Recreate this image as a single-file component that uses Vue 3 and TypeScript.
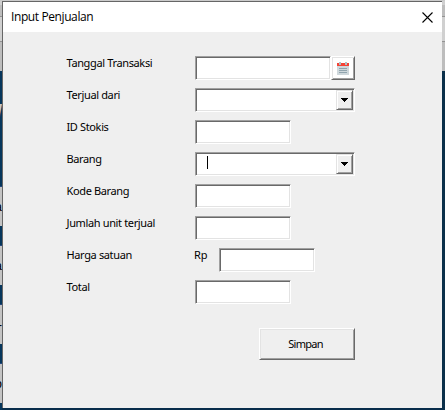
<script setup lang="ts">
import { ref } from 'vue'

interface Field {
  label: string
  kind: 'date' | 'combo' | 'text' | 'price'
  focused?: boolean
}

interface Band {
  height: number
  tone: 'light' | 'mid' | 'line' | 'navy' | 'cell'
  text?: string
}

const title = ref('Input Penjualan')

const fields: Field[] = [
  { label: 'Tanggal Transaksi', kind: 'date' },
  { label: 'Terjual dari', kind: 'combo' },
  { label: 'ID Stokis', kind: 'text' },
  { label: 'Barang', kind: 'combo', focused: true },
  { label: 'Kode Barang', kind: 'text' },
  { label: 'Jumlah unit terjual', kind: 'text' },
  { label: 'Harga satuan', kind: 'price' },
  { label: 'Total', kind: 'text' },
]

const leftBands: Band[] = [
  { height: 4, tone: 'light' },
  { height: 11, tone: 'mid' },
  { height: 1, tone: 'line' },
  { height: 24, tone: 'light' },
  { height: 1, tone: 'line' },
  { height: 29, tone: 'mid' },
  { height: 33, tone: 'navy' },
  { height: 18, tone: 'navy', text: '/' },
  { height: 64, tone: 'navy' },
  { height: 40, tone: 'cell', text: 'a' },
  { height: 19, tone: 'navy' },
  { height: 40, tone: 'cell', text: 'a' },
  { height: 19, tone: 'navy' },
  { height: 40, tone: 'cell', text: '-' },
  { height: 19, tone: 'navy' },
  { height: 40, tone: 'cell', text: 'o' },
  { height: 7, tone: 'navy' },
]

const rightBands: Band[] = [
  { height: 4, tone: 'light' },
  { height: 11, tone: 'mid' },
  { height: 1, tone: 'line' },
  { height: 24, tone: 'light' },
  { height: 1, tone: 'line' },
  { height: 29, tone: 'mid' },
  { height: 339, tone: 'navy' },
]
</script>

<template>
  <div class="screen">
    <div class="sheet-top"><span class="first">Controls</span><span class="second">Time</span></div>
    <div class="middle">
      <div class="strip left">
        <div v-for="(b, i) in leftBands" :key="i" class="band" :class="b.tone" :style="{ height: b.height + 'px' }">
          <span v-if="b.text">{{ b.text }}</span>
        </div>
      </div>
      <section class="dialog">
        <header class="titlebar">
          <span class="title">{{ title }}</span>
          <svg class="close" width="11" height="11" viewBox="0 0 11 11">
            <path d="M.5 .5 10.5 10.5M10.5 .5 .5 10.5" stroke="#000" stroke-width="1.1" fill="none" />
          </svg>
        </header>
        <form class="form" @submit.prevent>
          <div v-for="f in fields" :key="f.label" class="row">
            <label class="label">{{ f.label }}</label>
            <span v-if="f.kind === 'price'" class="prefix">Rp</span>
            <div class="sunken" :class="f.kind">
              <span v-if="f.focused" class="caret"></span>
              <button v-if="f.kind === 'combo'" type="button" class="raised drop">
                <svg width="7" height="4" viewBox="0 0 7 4" shape-rendering="crispEdges">
                  <path d="M0 0h7v1h-1v1h-1v1h-1v1h-1v-1h-1v-1h-1v-1h-1z" />
                </svg>
              </button>
            </div>
            <button v-if="f.kind === 'date'" type="button" class="raised calendar">
              <svg width="12" height="13" viewBox="0 0 12 13">
                <path d="M0 4h12v9H0z" fill="#cfd8dc" />
                <path d="M0 1h12v3H0z" fill="#f44336" />
                <path d="M2 0h2v3H2zM8 0h2v3H8z" fill="#b0bec5" />
                <path d="M2 6h8v1H2zM2 8h8v1H2zM2 10h8v1H2z" fill="#90a4ae" />
              </svg>
            </button>
          </div>
          <button type="submit" class="raised save">Simpan</button>
        </form>
      </section>
      <div class="strip right">
        <div v-for="(b, i) in rightBands" :key="i" class="band" :class="b.tone" :style="{ height: b.height + 'px' }"></div>
      </div>
    </div>
  </div>
</template>

<style>
body {
  margin: 0;
  overflow: hidden;
}
</style>

<style scoped>
.screen {
  width: 445px;
  height: 410px;
  overflow: hidden;
  background: #082d4b;
  font-family: "Noto Sans", "Open Sans", sans-serif;
  font-size: 11px;
  color: #000;
}
.sheet-top {
  display: flex;
  height: 1px;
  overflow: hidden;
  background: #cbcbcb;
  font: bold 12px/1px "Liberation Sans", sans-serif;
  color: #333;
}
.sheet-top span {
  margin-top: -4px;
}
.first {
  width: 222px;
  padding-left: 19px;
}
.middle {
  display: flex;
  height: 409px;
}
.strip {
  overflow: hidden;
}
.left {
  width: 2px;
}
.right {
  width: 3px;
}
.band {
  display: flex;
  align-items: center;
  justify-content: flex-end;
  box-sizing: border-box;
  overflow: hidden;
  font: 13px/16px "Liberation Sans", sans-serif;
}
.light { background: #d0d0d0; }
.mid { background: #bdbdbd; }
.line { background: #929292; }
.navy { background: #06365c; color: #c8c8c8; font-size: 22px; font-weight: bold; }
.right .navy { background: #0b304a; }
.cell { background: #c4c4c4; border-top: 1px solid #24477f; }
.dialog {
  box-sizing: border-box;
  width: 440px;
  height: 407px;
  border-top: 1px solid #666;
  border-left: 1px solid #666;
  background: #efefef;
}
.titlebar {
  display: flex;
  align-items: center;
  justify-content: space-between;
  box-sizing: border-box;
  height: 30px;
  padding: 0 9px 0 8px;
  background: #fff;
  font: 12px/16px "Open Sans", "Noto Sans", sans-serif;
}
.title {
  letter-spacing: -0.4px;
}
.form {
  display: flex;
  flex-direction: column;
  gap: 8px;
  padding: 24px 0 0 63px;
}
.row {
  display: flex;
  height: 24px;
}
.label {
  box-sizing: border-box;
  width: 129px;
  padding-left: 0.5px;
  line-height: 14px;
  letter-spacing: -0.36px;
  white-space: nowrap;
}
.prefix {
  width: 25px;
  margin-left: -1px;
  line-height: 14px;
}
.sunken {
  display: flex;
  box-sizing: border-box;
  width: 96px;
  height: 24px;
  border: 1px solid;
  border-color: #a0a0a0 #fff #fff #a0a0a0;
  background: #fff;
  box-shadow: inset 1px 1px #696969, inset -1px -1px #e3e3e3;
}
.sunken.date {
  width: 136px;
}
.sunken.combo {
  width: 160px;
  padding: 1px;
}
.caret {
  width: 1px;
  height: 13px;
  margin: 2px 0 0 10px;
  background: #000;
}
.raised {
  display: flex;
  align-items: center;
  justify-content: center;
  box-sizing: border-box;
  padding: 0;
  border: 1px solid;
  border-color: #fff #696969 #696969 #fff;
  border-radius: 0;
  background: #efefef;
  box-shadow: inset 1px 1px #e3e3e3, inset -1px -1px #a0a0a0;
  font: inherit;
  color: inherit;
}
.drop {
  width: 17px;
  height: 20px;
  margin-left: auto;
  border-color: #e3e3e3 #696969 #696969 #e3e3e3;
  box-shadow: inset 1px 1px #fff, inset -1px -1px #a0a0a0;
}
.calendar {
  width: 24px;
  height: 24px;
  background: #fff;
}
.save {
  width: 96px;
  height: 32px;
  margin: 16px 0 0 193px;
  padding: 0 3px 2px 0;
  letter-spacing: -0.75px;
}
</style>
